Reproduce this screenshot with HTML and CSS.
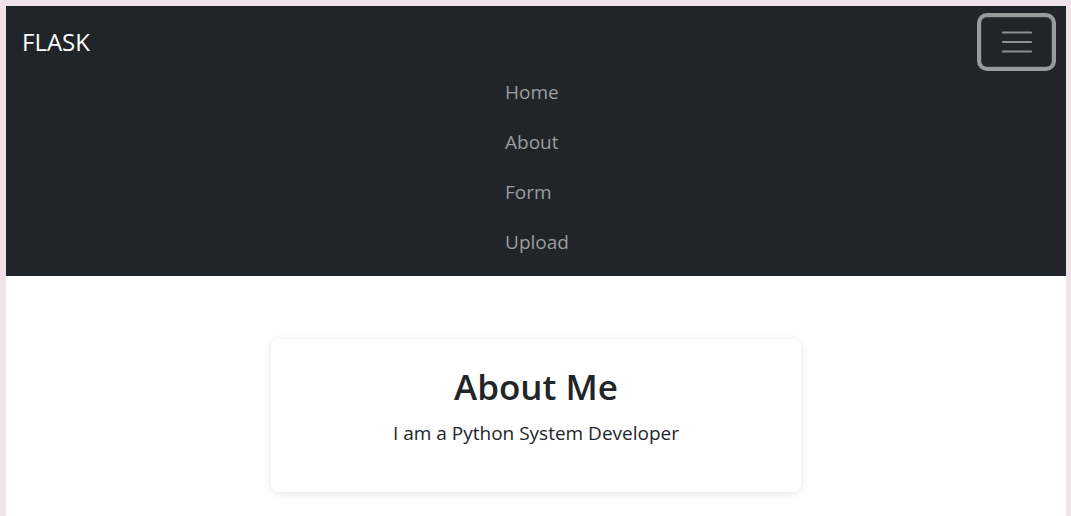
FILE: index.html
```html
<!DOCTYPE html>
<html lang="en">
<head>
<meta charset="utf-8">
<title>Flask</title>
<link rel="stylesheet" href="styles.css">
</head>
<body>
<div class="page">
  <nav class="navbar">
    <div class="navbar-top">
      <a class="brand" href="#">FLASK</a>
      <button class="toggler" type="button" aria-label="Toggle navigation">
        <svg width="30" height="22" viewBox="0 0 30 22" aria-hidden="true">
          <path d="M1 1.5h28M1 11h28M1 20.5h28" stroke="#8e8f91" stroke-width="2.2" stroke-linecap="round" fill="none"/>
        </svg>
      </button>
    </div>
    <ul class="nav-list">
      <li><a class="nav-link" href="#">Home</a></li>
      <li><a class="nav-link" href="#">About</a></li>
      <li><a class="nav-link" href="#">Form</a></li>
      <li><a class="nav-link" href="#">Upload</a></li>
    </ul>
  </nav>
  <main class="main">
    <section class="card">
      <h1 class="card-title">About Me</h1>
      <p class="card-text">I am a Python System Developer</p>
    </section>
  </main>
</div>
</body>
</html>
```

FILE: styles.css
```css
html, body {
  margin: 0;
  padding: 0;
}
body {
  background: #efe3e9;
  font-family: "Open Sans", "Noto Sans", sans-serif;
  color: #212529;
  padding: 6px 5px 0 6px;
  height: 516px;
  box-sizing: border-box;
  overflow: hidden;
}
.page {
  background: #ffffff;
  height: 100%;
}
.navbar {
  background: #212529;
  padding: 11px 14px 9px 16px;
  display: flex;
  flex-direction: column;
}
.navbar-top {
  display: flex;
  justify-content: space-between;
  align-items: center;
}
.brand {
  color: #ffffff;
  text-decoration: none;
  font-size: 24px;
  line-height: 30px;
}
.toggler {
  width: 71px;
  height: 50px;
  border: 1px solid rgba(255, 255, 255, 0.1);
  border-radius: 6px;
  background: transparent;
  box-shadow: 0 0 0 4px #9a9b9c;
  display: flex;
  align-items: center;
  justify-content: center;
  padding: 0;
}
.nav-list {
  list-style: none;
  margin: 0 auto;
  padding: 0;
  display: flex;
  flex-direction: column;
  align-items: flex-start;
}
.nav-link {
  display: block;
  color: #9b9d9f;
  text-decoration: none;
  font-size: 19px;
  line-height: 30px;
  padding: 10px 0;
}
.main {
  display: flex;
  justify-content: center;
  padding-top: 63px;
}
.card {
  width: 530px;
  height: 153px;
  box-sizing: border-box;
  border-radius: 8px;
  background: #ffffff;
  box-shadow: 0 2px 8px rgba(0, 0, 0, 0.1);
  text-align: center;
  padding-top: 25px;
}
.card-title {
  margin: 0;
  font-size: 35px;
  font-weight: 600;
  line-height: 46px;
}
.card-text {
  margin: 8px 0 0;
  font-size: 19px;
  line-height: 30px;
}
```
